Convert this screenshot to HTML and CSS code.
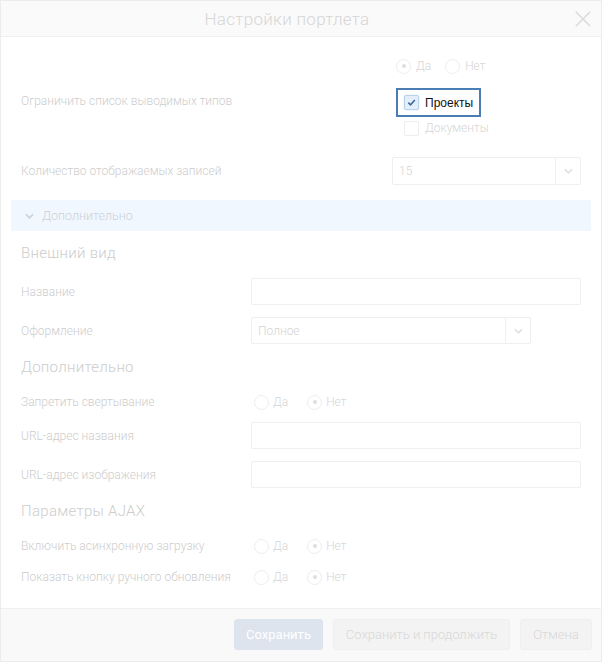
FILE: index.html
```html
<!DOCTYPE html>
<html lang="ru">
<head>
<meta charset="UTF-8" />
<title>Настройки портлета</title>
<link rel="stylesheet" href="styles.css">
</head>
<body>

<div class="dialog">
  <div class="dialog-head">
    <span class="dialog-title">Настройки портлета</span>
    <span class="dialog-close" aria-label="Закрыть">
      <svg viewBox="0 0 20 20"><path d="M2 2L18 18M18 2L2 18"/></svg>
    </span>
  </div>

  <div class="dialog-body">
    <div class="top-row types-row">
      <div class="top-label types-label">Ограничить список выводимых типов</div>
      <div class="types-ctrl">
        <div class="radios">
          <span class="radio checked"></span><span class="radio-text">Да</span>
          <span class="radio"></span><span class="radio-text">Нет</span>
        </div>
        <div class="focus-box">
          <span class="check checked">
            <svg viewBox="0 0 12 12"><path d="M2.5 6.2L5 8.6L9.6 3.2"/></svg>
          </span>
          <span class="focus-text">Проекты</span>
        </div>
        <div class="check-line">
          <span class="check"></span><span class="check-text">Документы</span>
        </div>
      </div>
    </div>

    <div class="top-row count-row">
      <div class="top-label">Количество отображаемых записей</div>
      <div class="select count-select">
        <span class="select-value">15</span>
        <span class="select-arrow"><svg viewBox="0 0 10 6"><path d="M1 1L5 5L9 1"/></svg></span>
      </div>
    </div>

    <div class="more-bar">
      <svg class="more-chevron" viewBox="0 0 10 6"><path d="M1 1L5 5L9 1"/></svg>
      <span>Дополнительно</span>
    </div>

    <div class="section">
      <h3 class="section-title first">Внешний вид</h3>
      <div class="row">
        <div class="row-label">Название</div>
        <div class="input"></div>
      </div>
      <div class="row">
        <div class="row-label">Оформление</div>
        <div class="select look-select">
          <span class="select-value">Полное</span>
          <span class="select-arrow"><svg viewBox="0 0 10 6"><path d="M1 1L5 5L9 1"/></svg></span>
        </div>
      </div>

      <h3 class="section-title">Дополнительно</h3>
      <div class="row radio-row">
        <div class="row-label">Запретить свертывание</div>
        <div class="radios">
          <span class="radio"></span><span class="radio-text">Да</span>
          <span class="radio checked"></span><span class="radio-text">Нет</span>
        </div>
      </div>
      <div class="row">
        <div class="row-label">URL-адрес названия</div>
        <div class="input"></div>
      </div>
      <div class="row">
        <div class="row-label">URL-адрес изображения</div>
        <div class="input"></div>
      </div>

      <h3 class="section-title">Параметры AJAX</h3>
      <div class="row radio-row">
        <div class="row-label">Включить асинхронную загрузку</div>
        <div class="radios">
          <span class="radio"></span><span class="radio-text">Да</span>
          <span class="radio checked"></span><span class="radio-text">Нет</span>
        </div>
      </div>
      <div class="row radio-row">
        <div class="row-label">Показать кнопку ручного обновления</div>
        <div class="radios">
          <span class="radio"></span><span class="radio-text">Да</span>
          <span class="radio checked"></span><span class="radio-text">Нет</span>
        </div>
      </div>
    </div>
  </div>

  <div class="dialog-foot">
    <button class="btn btn-primary">Сохранить</button>
    <button class="btn btn-wide">Сохранить и продолжить</button>
    <button class="btn btn-cancel">Отмена</button>
  </div>
</div>

</body>
</html>
```

FILE: styles.css
```css
body {
  margin: 0;
  background-color: #fff;
  font-family: Roboto, "Noto Sans", Arial, sans-serif;
  font-size: 12px;
  font-weight: 300;
  color: #cdcdcd;
}

.dialog {
  box-sizing: border-box;
  width: 602px;
  height: 662px;
  border: 1px solid #ececec;
  display: flex;
  flex-direction: column;
}

/* шапка */
.dialog-head {
  position: relative;
  height: 35px;
  flex-shrink: 0;
  background-color: #fafafa;
  border-bottom: 1px solid #efefef;
  display: flex;
  align-items: center;
  justify-content: center;
  padding-right: 28px;
}
.dialog-title {
  font-size: 17px;
  color: #d6d6d6;
  letter-spacing: 0.3px;
}
.dialog-close {
  position: absolute;
  right: 9px;
  top: 9px;
  width: 18px;
  height: 18px;
}
.dialog-close svg {
  width: 18px; height: 18px;
  stroke: #dcdcdc;
  stroke-width: 1.8;
  fill: none;
}

.dialog-body {
  flex: 1;
  padding: 19px 10px 0 10px;
}

/* верхний блок */
.top-row {
  display: flex;
  padding-left: 10px;
}
.top-label {
  width: 371px;
  flex-shrink: 0;
  line-height: 16px;
}
.types-label {
  padding-top: 37px;
}
.types-ctrl {
  display: flex;
  flex-direction: column;
  padding-left: 4px;
}
.count-row {
  margin-top: 21px;
  align-items: center;
}

.radios {
  display: flex;
  align-items: center;
  height: 20px;
}
.radio {
  box-sizing: border-box;
  width: 15px;
  height: 15px;
  border: 1px solid #ededed;
  border-radius: 50%;
  display: flex;
  align-items: center;
  justify-content: center;
  margin-right: 5px;
  flex-shrink: 0;
}
.radio.checked::after {
  content: "";
  width: 4px;
  height: 4px;
  border-radius: 50%;
  background-color: #dedede;
}
.radio-text {
  margin-right: 14px;
  color: #d6d6d6;
}

.focus-box {
  box-sizing: border-box;
  margin: 12px 0 0 0;
  width: 85px;
  height: 29px;
  border: 2px solid #4a7db4;
  background-color: #fff;
  display: flex;
  align-items: center;
  padding-left: 6px;
}
.check {
  box-sizing: border-box;
  width: 15px;
  height: 15px;
  border: 1px solid #eeeeee;
  border-radius: 2px;
  margin-right: 6px;
  display: flex;
  align-items: center;
  justify-content: center;
  flex-shrink: 0;
}
.check.checked {
  border-color: #b9d2ec;
  background-color: #e3eefa;
  box-shadow: 0 0 2px #cfe1f5;
}
.check svg {
  width: 11px; height: 11px;
  stroke: #3f6c9e;
  stroke-width: 1.8;
  fill: none;
}
.focus-text {
  color: #111;
  font-family: "Liberation Sans", Arial, sans-serif;
  font-weight: normal;
  font-size: 12px;
}
.check-line {
  display: flex;
  align-items: center;
  height: 16px;
  margin-top: 3px;
  padding-left: 8px;
}
.check-text {
  color: #d6d6d6;
}

/* селекты и поля */
.select {
  box-sizing: border-box;
  height: 28px;
  border: 1px solid #efefef;
  border-radius: 2px;
  display: flex;
  align-items: stretch;
}
.count-select {
  width: 189px;
}
.look-select {
  width: 280px;
  height: 27px;
}
.select-value {
  flex: 1;
  display: flex;
  align-items: center;
  padding-left: 6px;
  color: #d4d4d4;
}
.select-arrow {
  width: 24px;
  border-left: 1px solid #efefef;
  display: flex;
  align-items: center;
  justify-content: center;
}
.select-arrow svg {
  width: 9px; height: 6px;
  stroke: #dcdcdc;
  stroke-width: 1.4;
  fill: none;
}

.more-bar {
  margin-top: 15px;
  height: 31px;
  background-color: #f0f7fe;
  display: flex;
  align-items: center;
  padding-left: 14px;
  color: #cdd2d8;
  font-size: 12.5px;
}
.more-chevron {
  width: 9px; height: 6px;
  stroke: #c9d3de;
  stroke-width: 1.8;
  fill: none;
  margin-right: 8px;
}

/* нижний блок */
.section {
  padding-left: 10px;
}
.section-title {
  margin: 13px 0 14px 0;
  height: 20px;
  line-height: 20px;
  font-size: 15px;
  font-weight: 300;
  color: #cdcdcd;
  letter-spacing: 0.3px;
}
.section-title.first {
  margin-top: 12px;
  margin-bottom: 15px;
}
.row {
  display: flex;
  align-items: center;
  height: 27px;
  margin-bottom: 12px;
}
.row-label {
  width: 230px;
  flex-shrink: 0;
}
.radio-row {
  height: 22px;
  margin-bottom: 9px;
}
.radio-row .radios {
  padding-left: 3px;
}
.radio-row .radio {
  margin-right: 4px;
}
.radio-row .radio-text {
  margin-right: 19px;
}
.input {
  box-sizing: border-box;
  width: 330px;
  height: 27px;
  border: 1px solid #efefef;
  border-radius: 2px;
}

/* подвал */
.dialog-foot {
  height: 53px;
  flex-shrink: 0;
  background-color: #f9f9f9;
  border-top: 1px solid #f0f0f0;
  display: flex;
  align-items: flex-start;
  justify-content: flex-end;
  box-sizing: border-box;
  padding: 10px 9px 0 0;
  gap: 10px;
}
.btn {
  height: 31px;
  padding: 0;
  border: 1px solid #efefef;
  border-radius: 3px;
  background-color: #f3f3f3;
  color: #d8d8d8;
  font-family: Roboto, Arial, sans-serif;
  font-weight: 300;
  font-size: 13px;
}
.btn-primary {
  width: 89px;
  background-color: #dde4ee;
  border-color: #dde4ee;
  color: #fff;
  font-weight: normal;
}
.btn-wide {
  width: 177px;
}
.btn-cancel {
  width: 72px;
}
```
